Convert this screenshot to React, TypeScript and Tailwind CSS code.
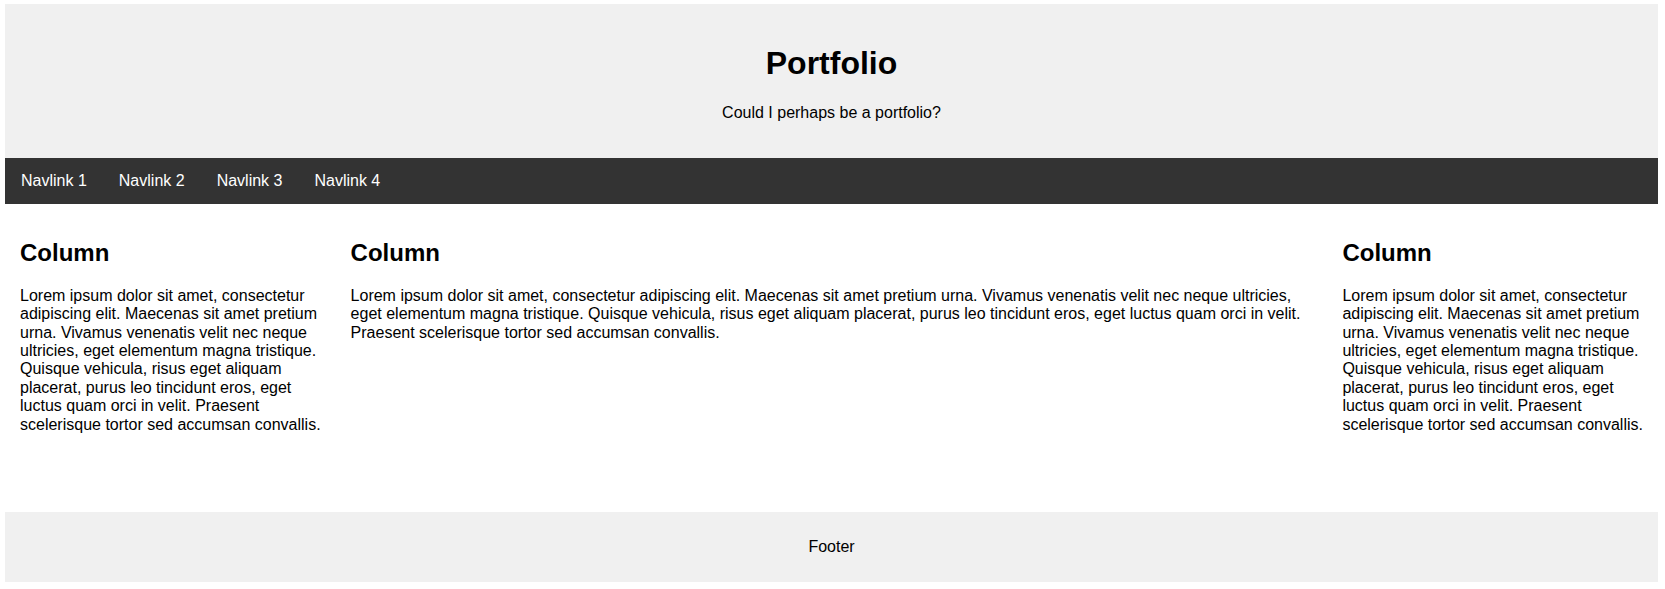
const lorem =
  'Lorem ipsum dolor sit amet, consectetur adipiscing elit. Maecenas sit amet pretium urna. Vivamus venenatis velit nec neque ultricies, eget elementum magna tristique. Quisque vehicula, risus eget aliquam placerat, purus leo tincidunt eros, eget luctus quam orci in velit. Praesent scelerisque tortor sed accumsan convallis.'

const navlinks = ['Navlink 1', 'Navlink 2', 'Navlink 3', 'Navlink 4']

const columns = [
  { title: 'Column', width: 'w-1/5' },
  { title: 'Column', width: 'w-3/5' },
  { title: 'Column', width: 'w-1/5' },
]

export default function App() {
  return (
    <div className="bg-white pl-[5px] pr-[7px] pt-[4px] pb-[7px] text-black font-['Liberation_Sans',Arial,sans-serif] text-base leading-[1.15]">
      <header className="bg-[#f0f0f0] p-5 text-center">
        <h1 className="my-[21.44px] text-[32px] font-bold leading-[1.15]">Portfolio</h1>
        <p className="my-4">Could I perhaps be a portfolio?</p>
      </header>

      <nav className="flex bg-[#333333]">
        {navlinks.map((link) => (
          <a key={link} href="#" className="px-4 py-[14px] text-white">
            {link}
          </a>
        ))}
      </nav>

      <main className="flex h-[308px] items-start">
        {columns.map((col, i) => (
          <div key={i} className={`${col.width} p-[15px]`}>
            <h2 className="my-[19.92px] text-2xl font-bold leading-[1.15]">{col.title}</h2>
            <p className="my-4">{lorem}</p>
          </div>
        ))}
      </main>

      <footer className="flex h-[70px] items-center justify-center bg-[#f0f0f0]">
        <p>Footer</p>
      </footer>
    </div>
  )
}
